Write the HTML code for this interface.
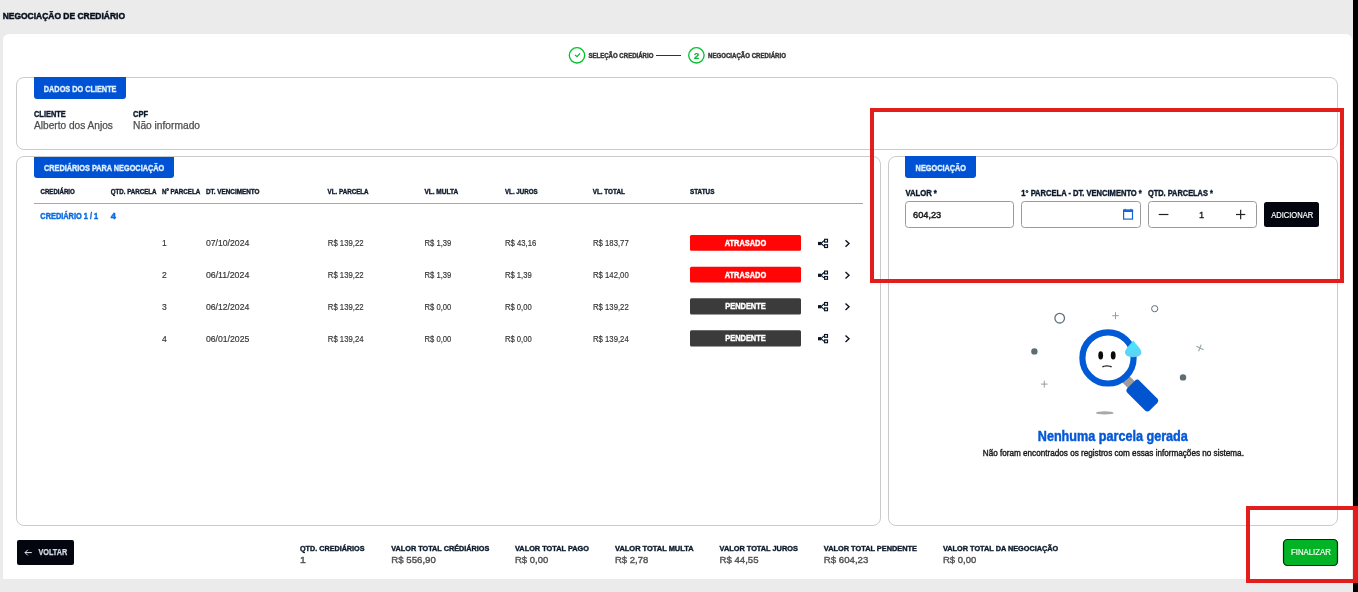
<!DOCTYPE html>
<html><head><meta charset="utf-8"><title>Negociação de Crediário</title>
<style>
html,body{margin:0;padding:0;}
body{width:1358px;height:592px;position:relative;overflow:hidden;background:#ebebeb;font-family:"Liberation Sans",sans-serif;}
.card{position:absolute;left:3px;top:34px;width:1349px;height:545px;background:#fff;border-radius:6px 6px 0 0;}
.box{position:absolute;box-sizing:border-box;border:1px solid #cbcbcb;border-radius:8px;}
.tab{position:absolute;background:#0052d4;border-radius:0 0 3px 3px;}
.red{position:absolute;box-sizing:border-box;border:4px solid #e31c1c;}
svg{position:absolute;left:0;top:0;will-change:transform;}
</style></head><body>

<div class="card"></div>
<div class="box" style="left:16px;top:77px;width:1322px;height:73px"></div>
<div class="tab" style="left:34px;top:77px;width:92px;height:22px"></div>
<div class="box" style="left:16px;top:156px;width:865px;height:370px"></div>
<div class="tab" style="left:34px;top:157px;width:140px;height:21px"></div>
<div class="box" style="left:888px;top:156px;width:450px;height:370px"></div>
<div class="tab" style="left:905px;top:156px;width:71px;height:22px"></div>

<svg width="1358" height="592" viewBox="0 0 1358 592" font-family="Liberation Sans, sans-serif">
<circle cx="577.0" cy="55.35" r="7.7" fill="none" stroke="#00c22e" stroke-width="1.35"/>
<path d="M575.0 54.9 L577.0 56.7 L580.0 53.3" fill="none" stroke="#00b82e" stroke-width="1.2"/>
<line x1="656" y1="55.5" x2="681" y2="55.5" stroke="#333" stroke-width="1"/>
<circle cx="696.4" cy="55.35" r="7.7" fill="none" stroke="#00c22e" stroke-width="1.35"/>
<line x1="34" y1="203.5" x2="863" y2="203.5" stroke="#a8a8a8" stroke-width="1"/>
<rect x="690" y="235.0" width="111" height="15.8" rx="1.5" fill="#ff0505"/>
<rect x="818" y="241.90" width="3.2" height="3.2" fill="#0a1526"/>
<rect x="824.6" y="239.30" width="2.9" height="2.8" fill="none" stroke="#0a1526" stroke-width="1.15"/>
<rect x="824.6" y="244.70" width="2.9" height="2.8" fill="none" stroke="#0a1526" stroke-width="1.15"/>
<path d="M821 243.50 L824 240.70 M821 243.50 L824 246.10" stroke="#0a1526" stroke-width="1.1"/>
<path d="M845.5 240.30 L849 243.50 L845.5 246.70" fill="none" stroke="#0a1526" stroke-width="1.4"/>
<rect x="690" y="266.8" width="111" height="15.8" rx="1.5" fill="#ff0505"/>
<rect x="818" y="273.70" width="3.2" height="3.2" fill="#0a1526"/>
<rect x="824.6" y="271.10" width="2.9" height="2.8" fill="none" stroke="#0a1526" stroke-width="1.15"/>
<rect x="824.6" y="276.50" width="2.9" height="2.8" fill="none" stroke="#0a1526" stroke-width="1.15"/>
<path d="M821 275.30 L824 272.50 M821 275.30 L824 277.90" stroke="#0a1526" stroke-width="1.1"/>
<path d="M845.5 272.10 L849 275.30 L845.5 278.50" fill="none" stroke="#0a1526" stroke-width="1.4"/>
<rect x="690" y="298.2" width="111" height="16.3" rx="1.5" fill="#3b3b3b"/>
<rect x="818" y="305.10" width="3.2" height="3.2" fill="#0a1526"/>
<rect x="824.6" y="302.50" width="2.9" height="2.8" fill="none" stroke="#0a1526" stroke-width="1.15"/>
<rect x="824.6" y="307.90" width="2.9" height="2.8" fill="none" stroke="#0a1526" stroke-width="1.15"/>
<path d="M821 306.70 L824 303.90 M821 306.70 L824 309.30" stroke="#0a1526" stroke-width="1.1"/>
<path d="M845.5 303.50 L849 306.70 L845.5 309.90" fill="none" stroke="#0a1526" stroke-width="1.4"/>
<rect x="690" y="330.2" width="111" height="16.3" rx="1.5" fill="#3b3b3b"/>
<rect x="818" y="337.10" width="3.2" height="3.2" fill="#0a1526"/>
<rect x="824.6" y="334.50" width="2.9" height="2.8" fill="none" stroke="#0a1526" stroke-width="1.15"/>
<rect x="824.6" y="339.90" width="2.9" height="2.8" fill="none" stroke="#0a1526" stroke-width="1.15"/>
<path d="M821 338.70 L824 335.90 M821 338.70 L824 341.30" stroke="#0a1526" stroke-width="1.1"/>
<path d="M845.5 335.50 L849 338.70 L845.5 341.90" fill="none" stroke="#0a1526" stroke-width="1.4"/>
<rect x="905.5" y="201.5" width="108" height="26" rx="3" fill="#fff" stroke="#9a9a9a" stroke-width="1"/>
<rect x="1021.5" y="201.5" width="119" height="26" rx="3" fill="#fff" stroke="#9a9a9a" stroke-width="1"/>
<rect x="1148.5" y="201.5" width="108" height="26" rx="3" fill="#fff" stroke="#9a9a9a" stroke-width="1"/>
<rect x="1123.6" y="210.2" width="8.9" height="8.9" fill="none" stroke="#1565d8" stroke-width="1.2"/>
<rect x="1123" y="209.6" width="10.1" height="2.4" fill="#1565d8"/>
<rect x="1124.6" y="208.8" width="1.1" height="1.2" fill="#1565d8"/><rect x="1130.4" y="208.8" width="1.1" height="1.2" fill="#1565d8"/>
<line x1="1158.7" y1="214.5" x2="1168.4" y2="214.5" stroke="#222" stroke-width="1.2"/>
<line x1="1236" y1="214.5" x2="1245.3" y2="214.5" stroke="#222" stroke-width="1.2"/><line x1="1240.65" y1="209.8" x2="1240.65" y2="219.2" stroke="#222" stroke-width="1.2"/>
<rect x="1264" y="202" width="55" height="25" rx="2.5" fill="#03060f"/>
<circle cx="1059.7" cy="318.2" r="4.8" fill="none" stroke="#5f7279" stroke-width="1.3"/>
<circle cx="1154.7" cy="308.7" r="3.1" fill="none" stroke="#5d6d74" stroke-width="1"/>
<circle cx="1034.4" cy="351.4" r="3.2" fill="#5d6d74"/>
<circle cx="1183" cy="377.4" r="3.2" fill="#5d6d74"/>
<path d="M1115.5 312.2 V319.2 M1112.2 315.7 H1118.8" stroke="#8a9599" stroke-width="0.9"/>
<path d="M1044.3 380.6 V387.6 M1041 384.1 H1047.6" stroke="#8a9599" stroke-width="0.9"/>
<path d="M1196.4 346.3 L1203.6 349.7 M1201.2 344.6 L1198.6 351.2" stroke="#94a6ab" stroke-width="1.1"/>
<ellipse cx="1104.8" cy="412.9" rx="8.8" ry="1.7" fill="#a4a9ad"/>
<g transform="translate(1128.3 381.6) rotate(-45)"><rect x="-4.8" y="-6" width="9.6" height="12" fill="#9c9c9c"/></g>
<g transform="translate(1142.3 395.6) rotate(-45)"><rect x="-8.6" y="-15.8" width="17.2" height="31.6" rx="3.6" fill="#0054d0"/></g>
<circle cx="1108.0" cy="357.9" r="25.6" fill="#fff" stroke="#005ad6" stroke-width="6.2"/>
<ellipse cx="1100.7" cy="355.4" rx="2.4" ry="4.1" fill="#0a0a0a"/>
<ellipse cx="1113.2" cy="355.4" rx="2.4" ry="4.1" fill="#0a0a0a"/>
<path d="M1102.4 367.2 Q1103.2 365.9 1107 365.9 Q1110.8 365.9 1111.6 367.2" fill="none" stroke="#222" stroke-width="1.3"/>
<defs><linearGradient id="dg" x1="0" y1="0" x2="0" y2="1"><stop offset="0" stop-color="#45e8ff"/><stop offset="1" stop-color="#62cff5"/></linearGradient></defs>
<path d="M1133.2 340.4 C1136.5 344.5 1141.4 349 1141.4 352.6 C1141.4 355.6 1137.6 357.2 1133.2 357.2 C1128.8 357.2 1125 355.6 1125 352.6 C1125 349 1130 344.5 1133.2 340.4 Z" fill="url(#dg)"/>
<rect x="17" y="540" width="57" height="25" rx="2" fill="#03060f"/>
<path d="M25 552.6 H31.8 M27.8 549.8 L25 552.6 L27.8 555.4" fill="none" stroke="#e8ecf2" stroke-width="1"/>
<rect x="1283.5" y="539.5" width="54" height="26" rx="4" fill="#02b325" stroke="#062a0c" stroke-width="1.2"/>
<text x="2.70" y="19.10" font-size="9.59" font-weight="700" fill="#08101e" stroke="#08101e" stroke-width="0.5" textLength="122.30" lengthAdjust="spacingAndGlyphs">NEGOCIAÇÃO DE CREDIÁRIO</text>
<text x="588.40" y="57.90" font-size="6.69" font-weight="700" fill="#333333" stroke="#333333" stroke-width="0.4" textLength="65.00" lengthAdjust="spacingAndGlyphs">SELEÇÃO CREDIÁRIO</text>
<text x="693.90" y="58.70" font-size="8.14" font-weight="700" fill="#00b82e" stroke="#00b82e" stroke-width="0.2" textLength="5.20" lengthAdjust="spacingAndGlyphs">2</text>
<text x="708.00" y="57.90" font-size="6.69" font-weight="700" fill="#333333" stroke="#333333" stroke-width="0.4" textLength="77.90" lengthAdjust="spacingAndGlyphs">NEGOCIAÇÃO CREDIÁRIO</text>
<text x="43.80" y="92.30" font-size="9.30" font-weight="700" fill="#dcefff" stroke="#dcefff" stroke-width="0.4" textLength="72.70" lengthAdjust="spacingAndGlyphs">DADOS DO CLIENTE</text>
<text x="34.00" y="117.10" font-size="8.43" font-weight="700" fill="#0c1a2c" stroke="#0c1a2c" stroke-width="0.4" textLength="31.80" lengthAdjust="spacingAndGlyphs">CLIENTE</text>
<text x="133.00" y="117.10" font-size="8.43" font-weight="700" fill="#0c1a2c" stroke="#0c1a2c" stroke-width="0.4" textLength="15.10" lengthAdjust="spacingAndGlyphs">CPF</text>
<text x="34.00" y="129.20" font-size="10.17" font-weight="400" fill="#4e4e4e" stroke="#4e4e4e" stroke-width="0.25" textLength="78.90" lengthAdjust="spacingAndGlyphs">Alberto dos Anjos</text>
<text x="133.00" y="129.20" font-size="10.17" font-weight="400" fill="#4e4e4e" stroke="#4e4e4e" stroke-width="0.25" textLength="67.00" lengthAdjust="spacingAndGlyphs">Não informado</text>
<text x="44.00" y="171.10" font-size="9.01" font-weight="700" fill="#dcefff" stroke="#dcefff" stroke-width="0.4" textLength="120.20" lengthAdjust="spacingAndGlyphs">CREDIÁRIOS PARA NEGOCIAÇÃO</text>
<text x="40.50" y="193.90" font-size="7.27" font-weight="700" fill="#0c1a2c" stroke="#0c1a2c" stroke-width="0.4" textLength="34.30" lengthAdjust="spacingAndGlyphs">CREDIÁRIO</text>
<text x="110.80" y="193.90" font-size="7.27" font-weight="700" fill="#0c1a2c" stroke="#0c1a2c" stroke-width="0.4" textLength="45.70" lengthAdjust="spacingAndGlyphs">QTD. PARCELA</text>
<text x="162.00" y="193.90" font-size="7.27" font-weight="700" fill="#0c1a2c" stroke="#0c1a2c" stroke-width="0.4" textLength="38.20" lengthAdjust="spacingAndGlyphs">Nº PARCELA</text>
<text x="206.00" y="193.90" font-size="7.27" font-weight="700" fill="#0c1a2c" stroke="#0c1a2c" stroke-width="0.4" textLength="53.50" lengthAdjust="spacingAndGlyphs">DT. VENCIMENTO</text>
<text x="327.60" y="193.90" font-size="7.27" font-weight="700" fill="#0c1a2c" stroke="#0c1a2c" stroke-width="0.4" textLength="41.00" lengthAdjust="spacingAndGlyphs">VL. PARCELA</text>
<text x="424.40" y="193.90" font-size="7.27" font-weight="700" fill="#0c1a2c" stroke="#0c1a2c" stroke-width="0.4" textLength="33.80" lengthAdjust="spacingAndGlyphs">VL. MULTA</text>
<text x="505.00" y="193.90" font-size="7.27" font-weight="700" fill="#0c1a2c" stroke="#0c1a2c" stroke-width="0.4" textLength="32.60" lengthAdjust="spacingAndGlyphs">VL. JUROS</text>
<text x="592.70" y="193.90" font-size="7.27" font-weight="700" fill="#0c1a2c" stroke="#0c1a2c" stroke-width="0.4" textLength="32.20" lengthAdjust="spacingAndGlyphs">VL. TOTAL</text>
<text x="690.00" y="193.90" font-size="7.27" font-weight="700" fill="#0c1a2c" stroke="#0c1a2c" stroke-width="0.4" textLength="24.40" lengthAdjust="spacingAndGlyphs">STATUS</text>
<text x="40.30" y="218.80" font-size="8.14" font-weight="700" fill="#0a6be2" stroke="#0a6be2" stroke-width="0.4" textLength="57.90" lengthAdjust="spacingAndGlyphs">CREDIÁRIO 1 / 1</text>
<text x="110.80" y="219.00" font-size="8.43" font-weight="700" fill="#0a6be2" stroke="#0a6be2" stroke-width="0.4" textLength="5.20" lengthAdjust="spacingAndGlyphs">4</text>
<text x="162.00" y="246.00" font-size="8.72" font-weight="400" fill="#373737" stroke="#373737" stroke-width="0.18" textLength="4.75" lengthAdjust="spacingAndGlyphs">1</text>
<text x="205.90" y="246.00" font-size="8.72" font-weight="400" fill="#373737" stroke="#373737" stroke-width="0.18" textLength="43.40" lengthAdjust="spacingAndGlyphs">07/10/2024</text>
<text x="327.80" y="246.00" font-size="8.72" font-weight="400" fill="#373737" stroke="#373737" stroke-width="0.18" textLength="35.70" lengthAdjust="spacingAndGlyphs">R$ 139,22</text>
<text x="424.60" y="246.00" font-size="8.72" font-weight="400" fill="#373737" stroke="#373737" stroke-width="0.18" textLength="26.71" lengthAdjust="spacingAndGlyphs">R$ 1,39</text>
<text x="505.00" y="246.00" font-size="8.72" font-weight="400" fill="#373737" stroke="#373737" stroke-width="0.18" textLength="31.20" lengthAdjust="spacingAndGlyphs">R$ 43,16</text>
<text x="593.00" y="246.00" font-size="8.72" font-weight="400" fill="#373737" stroke="#373737" stroke-width="0.18" textLength="35.70" lengthAdjust="spacingAndGlyphs">R$ 183,77</text>
<text x="745.50" y="246.00" font-size="8.58" font-weight="700" fill="#ffffff" stroke="#ffffff" stroke-width="0.4" text-anchor="middle" textLength="41.60" lengthAdjust="spacingAndGlyphs">ATRASADO</text>
<text x="162.00" y="278.00" font-size="8.72" font-weight="400" fill="#373737" stroke="#373737" stroke-width="0.18" textLength="4.75" lengthAdjust="spacingAndGlyphs">2</text>
<text x="205.90" y="278.00" font-size="8.72" font-weight="400" fill="#373737" stroke="#373737" stroke-width="0.18" textLength="43.40" lengthAdjust="spacingAndGlyphs">06/11/2024</text>
<text x="327.80" y="278.00" font-size="8.72" font-weight="400" fill="#373737" stroke="#373737" stroke-width="0.18" textLength="35.70" lengthAdjust="spacingAndGlyphs">R$ 139,22</text>
<text x="424.60" y="278.00" font-size="8.72" font-weight="400" fill="#373737" stroke="#373737" stroke-width="0.18" textLength="26.71" lengthAdjust="spacingAndGlyphs">R$ 1,39</text>
<text x="505.00" y="278.00" font-size="8.72" font-weight="400" fill="#373737" stroke="#373737" stroke-width="0.18" textLength="26.71" lengthAdjust="spacingAndGlyphs">R$ 1,39</text>
<text x="593.00" y="278.00" font-size="8.72" font-weight="400" fill="#373737" stroke="#373737" stroke-width="0.18" textLength="35.70" lengthAdjust="spacingAndGlyphs">R$ 142,00</text>
<text x="745.50" y="277.80" font-size="8.58" font-weight="700" fill="#ffffff" stroke="#ffffff" stroke-width="0.4" text-anchor="middle" textLength="41.60" lengthAdjust="spacingAndGlyphs">ATRASADO</text>
<text x="162.00" y="310.00" font-size="8.72" font-weight="400" fill="#373737" stroke="#373737" stroke-width="0.18" textLength="4.75" lengthAdjust="spacingAndGlyphs">3</text>
<text x="205.90" y="310.00" font-size="8.72" font-weight="400" fill="#373737" stroke="#373737" stroke-width="0.18" textLength="43.40" lengthAdjust="spacingAndGlyphs">06/12/2024</text>
<text x="327.80" y="310.00" font-size="8.72" font-weight="400" fill="#373737" stroke="#373737" stroke-width="0.18" textLength="35.70" lengthAdjust="spacingAndGlyphs">R$ 139,22</text>
<text x="424.60" y="310.00" font-size="8.72" font-weight="400" fill="#373737" stroke="#373737" stroke-width="0.18" textLength="26.71" lengthAdjust="spacingAndGlyphs">R$ 0,00</text>
<text x="505.00" y="310.00" font-size="8.72" font-weight="400" fill="#373737" stroke="#373737" stroke-width="0.18" textLength="26.71" lengthAdjust="spacingAndGlyphs">R$ 0,00</text>
<text x="593.00" y="310.00" font-size="8.72" font-weight="400" fill="#373737" stroke="#373737" stroke-width="0.18" textLength="35.70" lengthAdjust="spacingAndGlyphs">R$ 139,22</text>
<text x="745.50" y="309.20" font-size="8.58" font-weight="700" fill="#ffffff" stroke="#ffffff" stroke-width="0.4" text-anchor="middle" textLength="40.60" lengthAdjust="spacingAndGlyphs">PENDENTE</text>
<text x="162.00" y="341.70" font-size="8.72" font-weight="400" fill="#373737" stroke="#373737" stroke-width="0.18" textLength="4.75" lengthAdjust="spacingAndGlyphs">4</text>
<text x="205.90" y="341.70" font-size="8.72" font-weight="400" fill="#373737" stroke="#373737" stroke-width="0.18" textLength="43.40" lengthAdjust="spacingAndGlyphs">06/01/2025</text>
<text x="327.80" y="341.70" font-size="8.72" font-weight="400" fill="#373737" stroke="#373737" stroke-width="0.18" textLength="35.70" lengthAdjust="spacingAndGlyphs">R$ 139,24</text>
<text x="424.60" y="341.70" font-size="8.72" font-weight="400" fill="#373737" stroke="#373737" stroke-width="0.18" textLength="26.71" lengthAdjust="spacingAndGlyphs">R$ 0,00</text>
<text x="505.00" y="341.70" font-size="8.72" font-weight="400" fill="#373737" stroke="#373737" stroke-width="0.18" textLength="26.71" lengthAdjust="spacingAndGlyphs">R$ 0,00</text>
<text x="593.00" y="341.70" font-size="8.72" font-weight="400" fill="#373737" stroke="#373737" stroke-width="0.18" textLength="35.70" lengthAdjust="spacingAndGlyphs">R$ 139,24</text>
<text x="745.50" y="341.20" font-size="8.58" font-weight="700" fill="#ffffff" stroke="#ffffff" stroke-width="0.4" text-anchor="middle" textLength="40.60" lengthAdjust="spacingAndGlyphs">PENDENTE</text>
<text x="915.60" y="171.20" font-size="8.43" font-weight="700" fill="#dcefff" stroke="#dcefff" stroke-width="0.4" textLength="50.40" lengthAdjust="spacingAndGlyphs">NEGOCIAÇÃO</text>
<text x="905.40" y="196.00" font-size="8.43" font-weight="700" fill="#0c1a2c" stroke="#0c1a2c" stroke-width="0.4" textLength="31.40" lengthAdjust="spacingAndGlyphs">VALOR *</text>
<text x="1021.30" y="196.00" font-size="8.43" font-weight="700" fill="#0c1a2c" stroke="#0c1a2c" stroke-width="0.4" textLength="120.50" lengthAdjust="spacingAndGlyphs">1° PARCELA - DT. VENCIMENTO *</text>
<text x="1148.00" y="196.00" font-size="8.43" font-weight="700" fill="#0c1a2c" stroke="#0c1a2c" stroke-width="0.4" textLength="64.80" lengthAdjust="spacingAndGlyphs">QTD. PARCELAS *</text>
<text x="913.00" y="218.00" font-size="9.30" font-weight="400" fill="#1a1a1a" stroke="#1a1a1a" stroke-width="0.45" textLength="28.20" lengthAdjust="spacingAndGlyphs">604,23</text>
<text x="1198.90" y="218.00" font-size="9.30" font-weight="400" fill="#1a1a1a" stroke="#1a1a1a" stroke-width="0.35">1</text>
<text x="1271.20" y="218.20" font-size="9.01" font-weight="400" fill="#ffffff" stroke="#ffffff" stroke-width="0.18" textLength="42.00" lengthAdjust="spacingAndGlyphs">ADICIONAR</text>
<text x="1037.80" y="440.90" font-size="13.95" font-weight="700" fill="#0558d6" stroke="#0558d6" stroke-width="0.45" textLength="150.00" lengthAdjust="spacingAndGlyphs">Nenhuma parcela gerada</text>
<text x="982.80" y="456.00" font-size="8.72" font-weight="400" fill="#161616" stroke="#161616" stroke-width="0.38" textLength="261.10" lengthAdjust="spacingAndGlyphs">Não foram encontrados os registros com essas informações no sistema.</text>
<text x="38.40" y="555.30" font-size="8.43" font-weight="700" fill="#d2dbe6" stroke="#d2dbe6" stroke-width="0.25" textLength="28.90" lengthAdjust="spacingAndGlyphs">VOLTAR</text>
<text x="1291.00" y="555.30" font-size="8.72" font-weight="400" fill="#f4fff4" stroke="#f4fff4" stroke-width="0.2" textLength="39.80" lengthAdjust="spacingAndGlyphs">FINALIZAR</text>
<text x="300.00" y="551.00" font-size="7.99" font-weight="700" fill="#0c1a2c" stroke="#0c1a2c" stroke-width="0.4" textLength="64.50" lengthAdjust="spacingAndGlyphs">QTD. CREDIÁRIOS</text>
<text x="300.00" y="563.10" font-size="9.88" font-weight="400" fill="#555555" stroke="#555555" stroke-width="0.42" textLength="5.87" lengthAdjust="spacingAndGlyphs">1</text>
<text x="391.30" y="551.00" font-size="7.99" font-weight="700" fill="#0c1a2c" stroke="#0c1a2c" stroke-width="0.4" textLength="98.00" lengthAdjust="spacingAndGlyphs">VALOR TOTAL CRÉDIÁRIOS</text>
<text x="391.30" y="563.10" font-size="9.88" font-weight="400" fill="#555555" stroke="#555555" stroke-width="0.42" textLength="44.56" lengthAdjust="spacingAndGlyphs">R$ 556,90</text>
<text x="515.00" y="551.00" font-size="7.99" font-weight="700" fill="#0c1a2c" stroke="#0c1a2c" stroke-width="0.4" textLength="74.00" lengthAdjust="spacingAndGlyphs">VALOR TOTAL PAGO</text>
<text x="515.00" y="563.10" font-size="9.88" font-weight="400" fill="#555555" stroke="#555555" stroke-width="0.42" textLength="33.32" lengthAdjust="spacingAndGlyphs">R$ 0,00</text>
<text x="615.00" y="551.00" font-size="7.99" font-weight="700" fill="#0c1a2c" stroke="#0c1a2c" stroke-width="0.4" textLength="78.60" lengthAdjust="spacingAndGlyphs">VALOR TOTAL MULTA</text>
<text x="615.00" y="563.10" font-size="9.88" font-weight="400" fill="#555555" stroke="#555555" stroke-width="0.42" textLength="33.32" lengthAdjust="spacingAndGlyphs">R$ 2,78</text>
<text x="719.60" y="551.00" font-size="7.99" font-weight="700" fill="#0c1a2c" stroke="#0c1a2c" stroke-width="0.4" textLength="78.20" lengthAdjust="spacingAndGlyphs">VALOR TOTAL JUROS</text>
<text x="719.60" y="563.10" font-size="9.88" font-weight="400" fill="#555555" stroke="#555555" stroke-width="0.42" textLength="38.94" lengthAdjust="spacingAndGlyphs">R$ 44,55</text>
<text x="823.80" y="551.00" font-size="7.99" font-weight="700" fill="#0c1a2c" stroke="#0c1a2c" stroke-width="0.4" textLength="93.20" lengthAdjust="spacingAndGlyphs">VALOR TOTAL PENDENTE</text>
<text x="823.80" y="563.10" font-size="9.88" font-weight="400" fill="#555555" stroke="#555555" stroke-width="0.42" textLength="44.56" lengthAdjust="spacingAndGlyphs">R$ 604,23</text>
<text x="943.00" y="551.00" font-size="7.99" font-weight="700" fill="#0c1a2c" stroke="#0c1a2c" stroke-width="0.4" textLength="115.30" lengthAdjust="spacingAndGlyphs">VALOR TOTAL DA NEGOCIAÇÃO</text>
<text x="943.00" y="563.10" font-size="9.88" font-weight="400" fill="#555555" stroke="#555555" stroke-width="0.42" textLength="33.32" lengthAdjust="spacingAndGlyphs">R$ 0,00</text>
</svg>

<div class="red" style="left:870px;top:108px;width:474px;height:175px"></div>
<div class="red" style="left:1246px;top:506px;width:112px;height:77px"></div>
<div style="position:absolute;left:1353px;top:506px;width:5px;height:77px;background:#e31c1c"></div>
<div style="position:absolute;left:1353px;top:0;width:5px;height:506px;background:#000"></div>
<div style="position:absolute;left:1353px;top:583px;width:5px;height:9px;background:#000"></div>

</body></html>
